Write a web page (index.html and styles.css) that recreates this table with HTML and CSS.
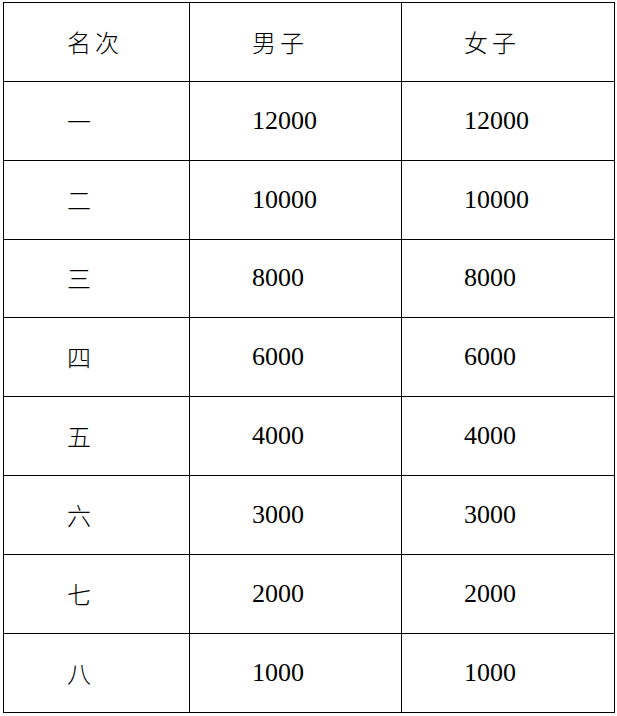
FILE: index.html
```html
<!DOCTYPE html>
<html lang="zh">
<head>
<meta charset="utf-8">
<link rel="stylesheet" href="styles.css">
</head>
<body>
<table class="prize">
  <colgroup><col class="c1"><col class="c2"><col class="c3"></colgroup>
  <tr><td class="zh">名次</td><td class="zh">男子</td><td class="zh">女子</td></tr>
  <tr><td class="zh">一</td><td>12000</td><td>12000</td></tr>
  <tr><td class="zh">二</td><td>10000</td><td>10000</td></tr>
  <tr><td class="zh">三</td><td>8000</td><td>8000</td></tr>
  <tr><td class="zh">四</td><td>6000</td><td>6000</td></tr>
  <tr><td class="zh">五</td><td>4000</td><td>4000</td></tr>
  <tr><td class="zh">六</td><td>3000</td><td>3000</td></tr>
  <tr><td class="zh">七</td><td>2000</td><td>2000</td></tr>
  <tr><td class="zh">八</td><td>1000</td><td>1000</td></tr>
</table>
</body>
</html>
```
FILE: styles.css
```css
html, body {
  margin: 0;
  padding: 0;
  background: #fff;
}
body {
  padding: 2px 0 0 3px;
}
.prize {
  border-collapse: collapse;
  table-layout: fixed;
  width: 611px;
  font-family: "Liberation Serif", "Noto Sans CJK SC", serif;
  font-size: 26px;
  color: #000;
}
.c1 { width: 186px; }
.c2 { width: 212px; }
.c3 { width: 213px; }
.prize tr {
  height: 78.85px;
}
.prize td {
  border: 1px solid #000;
  padding: 0 0 0 62px;
  vertical-align: middle;
  line-height: 1;
  box-sizing: border-box;
}
.prize td:first-child {
  padding-left: 63px;
}
.prize td.zh {
  font-family: "Noto Sans CJK SC", sans-serif;
  font-weight: 300;
  font-size: 24px;
  letter-spacing: 4px;
}
```
